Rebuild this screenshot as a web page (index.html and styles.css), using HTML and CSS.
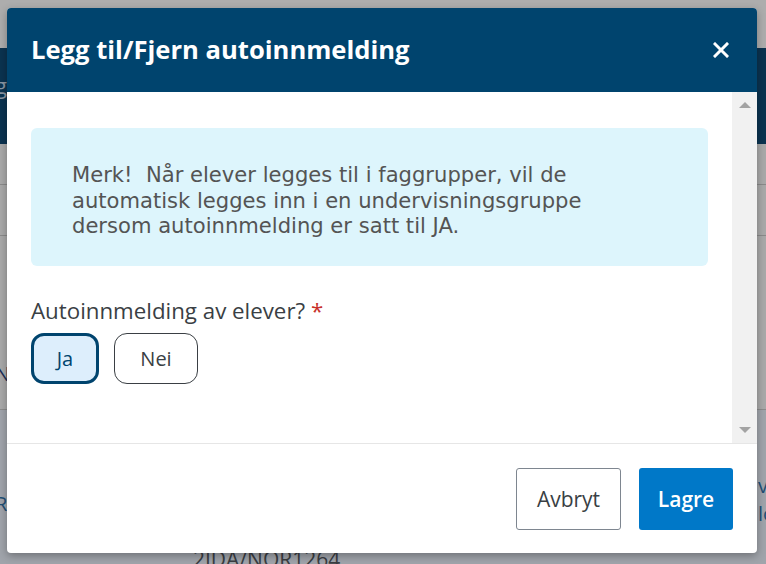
FILE: index.html
```html
<!DOCTYPE html>
<html lang="no">
<head>
<meta charset="utf-8">
<title>Legg til/Fjern autoinnmelding</title>
<link rel="stylesheet" href="styles.css">
</head>
<body>
<div class="page">
  <div class="page-top"></div>
  <div class="page-band"><span class="band-link">g</span></div>
  <div class="page-content">
    <div class="row row-a"></div>
    <div class="row row-b"></div>
    <div class="row row-c"><span class="row-letter">N</span></div>
  </div>
  <div class="page-lower">
    <span class="lower-r">R</span>
    <span class="lower-right">v<br>lo</span>
    <span class="lower-code">2IDA/NOR1264</span>
  </div>
</div>

<div class="modal" role="dialog" aria-labelledby="modal-title">
  <header class="modal-header">
    <h1 id="modal-title" class="modal-title">Legg til/Fjern autoinnmelding</h1>
    <button class="modal-close" aria-label="Lukk">
      <svg width="16" height="16" viewBox="0 0 16 16"><path d="M2 2 L14 14 M14 2 L2 14" stroke="#fff" stroke-width="3" stroke-linecap="square"/></svg>
    </button>
  </header>
  <div class="modal-body">
    <div class="modal-scroll">
      <div class="alert"><p class="alert-text">Merk!&nbsp; Når elever legges til i faggrupper, vil de automatisk legges inn i en undervisningsgruppe dersom autoinnmelding er satt til JA.</p></div>
      <div class="field-label">Autoinnmelding av elever? <span class="req">*</span></div>
      <div class="choices">
        <button class="choice choice-selected">Ja</button>
        <button class="choice">Nei</button>
      </div>
    </div>
    <div class="scrollbar">
      <span class="arrow arrow-up"></span>
      <span class="arrow arrow-down"></span>
    </div>
  </div>
  <footer class="modal-footer">
    <button class="btn btn-secondary">Avbryt</button>
    <button class="btn btn-primary">Lagre</button>
  </footer>
</div>
</body>
</html>
```

FILE: styles.css
```css
html, body {
  margin: 0;
  padding: 0;
}
body {
  width: 766px;
  height: 564px;
  overflow: hidden;
  position: relative;
  font-family: "Open Sans", "Liberation Sans", sans-serif;
  background: #a9a9a9;
}

/* dimmed page behind the dialog */
.page {
  display: flex;
  flex-direction: column;
  height: 564px;
}
.page-top {
  height: 48px;
  background: #adadad;
}
.page-band {
  height: 96px;
  background: #0b3350;
  color: #8a96a3;
  font-size: 22px;
  padding-top: 22px;
  box-sizing: border-box;
}
.band-link {
  text-decoration: underline;
  margin-left: -5px;
}
.page-content {
  height: 266px;
  background: #a9a9a9;
  display: flex;
  flex-direction: column;
}
.row {
  border-bottom: 1px solid #8a8a8a;
}
.row-a { height: 40px; }
.row-b { height: 50px; }
.row-c {
  flex: 1;
  border-bottom: 1px solid #8c8c8c;
  position: relative;
}
.row-letter {
  position: absolute;
  left: -5px;
  top: 124px;
  font-size: 20px;
  color: #1a2d55;
}
.page-lower {
  flex: 1;
  background: #a0a4ab;
  position: relative;
}
.lower-r {
  position: absolute;
  left: -5px;
  top: 80px;
  font-size: 20px;
  color: #1f4f75;
}
.lower-right {
  position: absolute;
  left: 758px;
  top: 62px;
  font-size: 20px;
  line-height: 28px;
  color: #1f4f75;
}
.lower-code {
  position: absolute;
  left: 193px;
  top: 135px;
  font-size: 21px;
  color: #3a3d42;
}

/* dialog */
.modal {
  position: absolute;
  left: 7px;
  top: 8px;
  width: 750px;
  height: 545px;
  background: #fff;
  border-radius: 4px;
  box-shadow: 0 3px 8px rgba(0, 0, 0, 0.3);
  display: flex;
  flex-direction: column;
  overflow: hidden;
}
.modal-header {
  height: 84px;
  flex: none;
  background: #00446e;
  display: flex;
  align-items: center;
  justify-content: space-between;
  padding: 0 28px 0 24px;
}
.modal-title {
  margin: 0;
  color: #fff;
  font-family: "Open Sans", sans-serif;
  font-weight: 700;
  font-size: 25.6px;
  padding-bottom: 2px;
}
.modal-close {
  background: none;
  border: 0;
  padding: 0;
  width: 16px;
  height: 16px;
  display: flex;
}

.modal-body {
  height: 351px;
  flex: none;
  display: flex;
  border-bottom: 1px solid #e6e6e6;
}
.modal-scroll {
  flex: 1;
  padding: 36px 24px 0 24px;
}
.alert {
  background: #ddf5fc;
  border-radius: 6px;
  padding: 34px 80px 27px 41px;
}
.alert-text {
  margin: 0;
  font-family: "DejaVu Sans", Verdana, sans-serif;
  font-size: 21.1px;
  line-height: 25.5px;
  color: #545454;
}
.field-label {
  margin-top: 31px;
  font-size: 22.3px;
  color: #3a3f44;
  line-height: 28px;
}
.req {
  color: #c8302b;
}
.choices {
  display: flex;
  gap: 15px;
  margin-top: 8px;
}
.choice {
  font-family: "Open Sans", sans-serif;
  font-size: 20px;
  color: #3a3f44;
  background: #fff;
  border: 1px solid #3a3f44;
  border-radius: 13px;
  height: 51px;
  width: 84px;
  padding: 0;
}
.choice-selected {
  width: 68px;
  border: 3px solid #00446e;
  background: #ddeefc;
  color: #00446e;
}
.scrollbar {
  width: 25px;
  flex: none;
  background: #f1f1f1;
  position: relative;
}
.arrow {
  position: absolute;
  left: 7px;
  width: 0;
  height: 0;
  border-left: 6px solid transparent;
  border-right: 6px solid transparent;
}
.arrow-up {
  top: 10px;
  border-bottom: 6px solid #a3a3a3;
}
.arrow-down {
  bottom: 10px;
  border-top: 6px solid #a3a3a3;
}

.modal-footer {
  flex: 1;
  display: flex;
  justify-content: flex-end;
  align-items: flex-start;
  gap: 18px;
  padding: 24px 24px 0 0;
}
.btn {
  height: 62px;
  font-family: "Open Sans", sans-serif;
  font-size: 21px;
  border-radius: 3px;
  padding: 0;
}
.btn-secondary {
  width: 105px;
  background: #fff;
  border: 1px solid #7e8690;
  color: #3a3f44;
}
.btn-primary {
  width: 94px;
  background: #0078c8;
  border: 0;
  color: #fff;
  font-weight: 600;
}
```
